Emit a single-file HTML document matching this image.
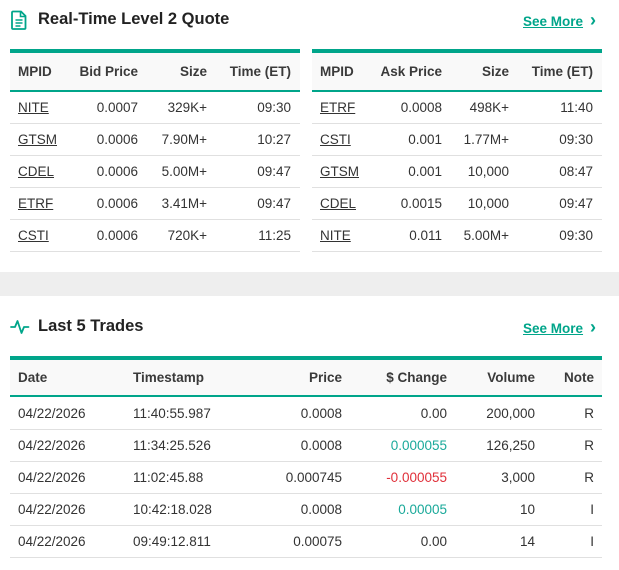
<!DOCTYPE html>
<html><head><meta charset="utf-8"><style>
*{margin:0;padding:0;box-sizing:border-box}
body{width:619px;height:570px;background:#fff;font-family:"Liberation Sans",sans-serif;color:#333;position:relative;overflow:hidden;font-size:13.5px}
.a{position:absolute;white-space:nowrap;line-height:16px}
.r{text-align:right}
.h{font-weight:bold;color:#3a3a3a}
.t{font-size:16.5px;font-weight:bold;color:#222}
.see{color:#00a58a;font-weight:bold;text-decoration:underline;font-size:13.5px}
.arr{color:#00a58a;font-weight:bold;font-size:18px}
.bar{position:absolute;background:#00a58a}
.hd{position:absolute;background:#f9f9f9}
.ln{position:absolute;height:1px;background:#e0e0e0}
u{text-decoration:underline;color:#333}
.g{color:#1aa99a}.rd{color:#e0303a}
.rows .a{margin-top:1px}
</style></head><body>
<svg class="a" style="left:11px;top:10px" width="16" height="20" viewBox="0 0 16 20"><path d="M2 1.5h8l4.5 4.5v12a1 1 0 0 1-1 1H2a1 1 0 0 1-1-1v-15.5a1 1 0 0 1 1-1z" fill="none" stroke="#00a58a" stroke-width="1.8"/><path d="M9.5 1.5v5h5M4.5 10h7M4.5 13h7M4.5 16h5" stroke="#00a58a" stroke-width="1.6" fill="none"/></svg>
<div class="a t" style="left:38px;top:11px">Real-Time Level 2 Quote</div>
<div class="a see" style="left:523px;top:14px">See More</div>
<div class="a arr" style="left:590px;top:12px">›</div>

<div class="bar" style="left:10px;top:49px;width:290px;height:4px"></div>
<div class="bar" style="left:312px;top:49px;width:290px;height:4px"></div>
<div class="hd" style="left:10px;top:53px;width:290px;height:38px"></div>
<div class="hd" style="left:312px;top:53px;width:290px;height:38px"></div>
<div class="bar" style="left:10px;top:90px;width:290px;height:2px"></div>
<div class="bar" style="left:312px;top:90px;width:290px;height:2px"></div>

<div class="rows">
<div class="a h" style="left:18px;top:63px">MPID</div>
<div class="a h r" style="left:38px;width:100px;top:63px">Bid Price</div>
<div class="a h r" style="left:107px;width:100px;top:63px">Size</div>
<div class="a h r" style="left:191px;width:100px;top:63px">Time (ET)</div>
<div class="a h" style="left:320px;top:63px">MPID</div>
<div class="a h r" style="left:342px;width:100px;top:63px">Ask Price</div>
<div class="a h r" style="left:409px;width:100px;top:63px">Size</div>
<div class="a h r" style="left:493px;width:100px;top:63px">Time (ET)</div>

<div class="a" style="left:18px;top:99px"><u>NITE</u></div><div class="a r" style="left:38px;width:100px;top:99px">0.0007</div><div class="a r" style="left:107px;width:100px;top:99px">329K+</div><div class="a r" style="left:191px;width:100px;top:99px">09:30</div>
<div class="a" style="left:18px;top:131px"><u>GTSM</u></div><div class="a r" style="left:38px;width:100px;top:131px">0.0006</div><div class="a r" style="left:107px;width:100px;top:131px">7.90M+</div><div class="a r" style="left:191px;width:100px;top:131px">10:27</div>
<div class="a" style="left:18px;top:163px"><u>CDEL</u></div><div class="a r" style="left:38px;width:100px;top:163px">0.0006</div><div class="a r" style="left:107px;width:100px;top:163px">5.00M+</div><div class="a r" style="left:191px;width:100px;top:163px">09:47</div>
<div class="a" style="left:18px;top:195px"><u>ETRF</u></div><div class="a r" style="left:38px;width:100px;top:195px">0.0006</div><div class="a r" style="left:107px;width:100px;top:195px">3.41M+</div><div class="a r" style="left:191px;width:100px;top:195px">09:47</div>
<div class="a" style="left:18px;top:227px"><u>CSTI</u></div><div class="a r" style="left:38px;width:100px;top:227px">0.0006</div><div class="a r" style="left:107px;width:100px;top:227px">720K+</div><div class="a r" style="left:191px;width:100px;top:227px">11:25</div>

<div class="a" style="left:320px;top:99px"><u>ETRF</u></div><div class="a r" style="left:342px;width:100px;top:99px">0.0008</div><div class="a r" style="left:409px;width:100px;top:99px">498K+</div><div class="a r" style="left:493px;width:100px;top:99px">11:40</div>
<div class="a" style="left:320px;top:131px"><u>CSTI</u></div><div class="a r" style="left:342px;width:100px;top:131px">0.001</div><div class="a r" style="left:409px;width:100px;top:131px">1.77M+</div><div class="a r" style="left:493px;width:100px;top:131px">09:30</div>
<div class="a" style="left:320px;top:163px"><u>GTSM</u></div><div class="a r" style="left:342px;width:100px;top:163px">0.001</div><div class="a r" style="left:409px;width:100px;top:163px">10,000</div><div class="a r" style="left:493px;width:100px;top:163px">08:47</div>
<div class="a" style="left:320px;top:195px"><u>CDEL</u></div><div class="a r" style="left:342px;width:100px;top:195px">0.0015</div><div class="a r" style="left:409px;width:100px;top:195px">10,000</div><div class="a r" style="left:493px;width:100px;top:195px">09:47</div>
<div class="a" style="left:320px;top:227px"><u>NITE</u></div><div class="a r" style="left:342px;width:100px;top:227px">0.011</div><div class="a r" style="left:409px;width:100px;top:227px">5.00M+</div><div class="a r" style="left:493px;width:100px;top:227px">09:30</div>
</div>

<div class="ln" style="left:10px;top:123px;width:290px"></div><div class="ln" style="left:10px;top:155px;width:290px"></div><div class="ln" style="left:10px;top:187px;width:290px"></div><div class="ln" style="left:10px;top:219px;width:290px"></div><div class="ln" style="left:10px;top:251px;width:290px"></div>
<div class="ln" style="left:312px;top:123px;width:290px"></div><div class="ln" style="left:312px;top:155px;width:290px"></div><div class="ln" style="left:312px;top:187px;width:290px"></div><div class="ln" style="left:312px;top:219px;width:290px"></div><div class="ln" style="left:312px;top:251px;width:290px"></div>

<div style="position:absolute;left:0;top:272px;width:619px;height:24px;background:#eeeeee"></div>

<svg class="a" style="left:10px;top:318px" width="20" height="18" viewBox="0 0 20 18"><path d="M1 9h4l2.5-6 4 12 2.5-6h4.5" fill="none" stroke="#00a58a" stroke-width="1.8" stroke-linejoin="round" stroke-linecap="round"/></svg>
<div class="a t" style="left:38px;top:318px">Last 5 Trades</div>
<div class="a see" style="left:523px;top:321px">See More</div>
<div class="a arr" style="left:590px;top:319px">›</div>

<div class="bar" style="left:10px;top:356px;width:592px;height:4px"></div>
<div class="hd" style="left:10px;top:360px;width:592px;height:36px"></div>
<div class="bar" style="left:10px;top:395px;width:592px;height:2px"></div>
<div class="rows">
<div class="a h" style="left:18px;top:369px">Date</div>
<div class="a h" style="left:133px;top:369px">Timestamp</div>
<div class="a h r" style="left:242px;width:100px;top:369px">Price</div>
<div class="a h r" style="left:347px;width:100px;top:369px">$ Change</div>
<div class="a h r" style="left:435px;width:100px;top:369px">Volume</div>
<div class="a h r" style="left:494px;width:100px;top:369px">Note</div>

<div class="a" style="left:18px;top:405px">04/22/2026</div><div class="a" style="left:133px;top:405px">11:40:55.987</div><div class="a r" style="left:242px;width:100px;top:405px">0.0008</div><div class="a r" style="left:347px;width:100px;top:405px">0.00</div><div class="a r" style="left:435px;width:100px;top:405px">200,000</div><div class="a r" style="left:494px;width:100px;top:405px">R</div>
<div class="a" style="left:18px;top:437px">04/22/2026</div><div class="a" style="left:133px;top:437px">11:34:25.526</div><div class="a r" style="left:242px;width:100px;top:437px">0.0008</div><div class="a r g" style="left:347px;width:100px;top:437px">0.000055</div><div class="a r" style="left:435px;width:100px;top:437px">126,250</div><div class="a r" style="left:494px;width:100px;top:437px">R</div>
<div class="a" style="left:18px;top:469px">04/22/2026</div><div class="a" style="left:133px;top:469px">11:02:45.88</div><div class="a r" style="left:242px;width:100px;top:469px">0.000745</div><div class="a r rd" style="left:347px;width:100px;top:469px">-0.000055</div><div class="a r" style="left:435px;width:100px;top:469px">3,000</div><div class="a r" style="left:494px;width:100px;top:469px">R</div>
<div class="a" style="left:18px;top:501px">04/22/2026</div><div class="a" style="left:133px;top:501px">10:42:18.028</div><div class="a r" style="left:242px;width:100px;top:501px">0.0008</div><div class="a r g" style="left:347px;width:100px;top:501px">0.00005</div><div class="a r" style="left:435px;width:100px;top:501px">10</div><div class="a r" style="left:494px;width:100px;top:501px">I</div>
<div class="a" style="left:18px;top:533px">04/22/2026</div><div class="a" style="left:133px;top:533px">09:49:12.811</div><div class="a r" style="left:242px;width:100px;top:533px">0.00075</div><div class="a r" style="left:347px;width:100px;top:533px">0.00</div><div class="a r" style="left:435px;width:100px;top:533px">14</div><div class="a r" style="left:494px;width:100px;top:533px">I</div>
</div>

<div class="ln" style="left:10px;top:429px;width:592px"></div><div class="ln" style="left:10px;top:461px;width:592px"></div><div class="ln" style="left:10px;top:493px;width:592px"></div><div class="ln" style="left:10px;top:525px;width:592px"></div><div class="ln" style="left:10px;top:557px;width:592px"></div>
</body></html>
